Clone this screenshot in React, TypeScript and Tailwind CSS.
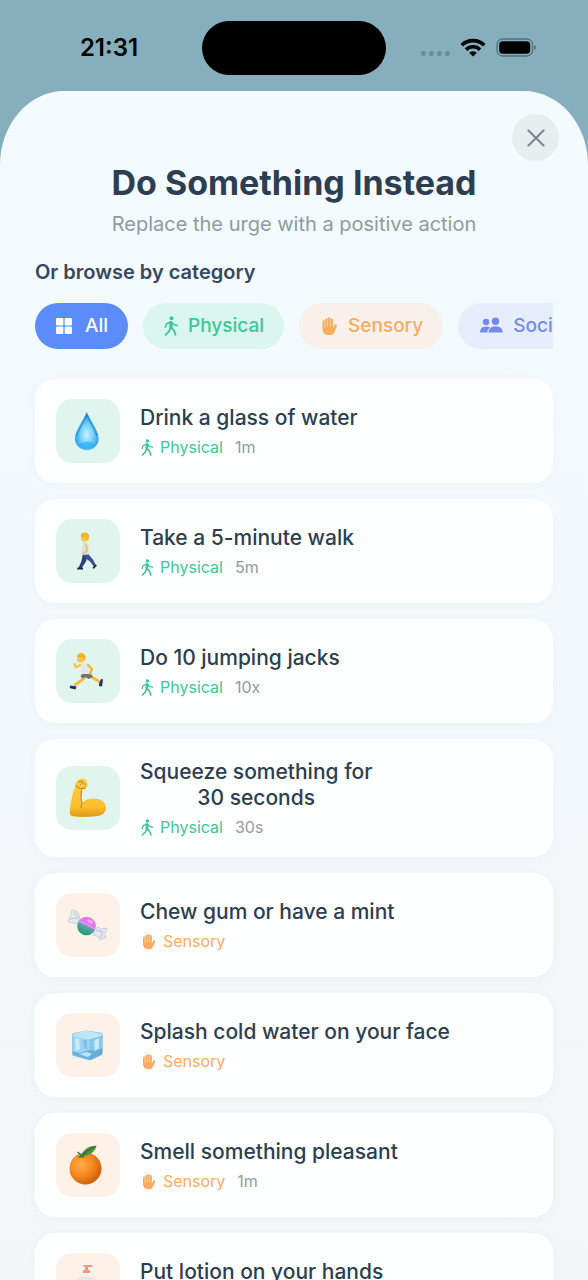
import { ReactNode, useState } from "react";
import clsx from "clsx";

type Category = "physical" | "sensory" | "social";

interface Activity {
  title: string;
  category: Category;
  amount?: string;
  picture: ReactNode;
}

interface IconProps {
  className?: string;
}

const WalkIcon = ({ className }: IconProps) => (
  <svg viewBox="0 0 16 20" className={className} fill="none" stroke="currentColor" strokeLinecap="round" strokeLinejoin="round">
    <circle cx="8.500" cy="2.300" r="2" fill="currentColor" stroke="none" />
    <path d="M8 6.500v5.500" strokeWidth="3.200" />
    <path d="M7.500 6 3.500 7.800 2.300 11.200M9 6.500l2 2.300 3.500.7" strokeWidth="1.500" />
    <path d="m7.300 12-1.300 3.500-3.500 3.300M8.700 12l2.500 2.800 1.300 4" strokeWidth="1.800" />
  </svg>
);

const HandIcon = ({ className }: IconProps) => (
  <svg viewBox="0 0 20 20" className={className}>
    <path
      d="M3.500 5.500q.2-1.300 1.300-1.300.6 0 1 .4.100-2.200 1.500-2.200.7 0 1.100.5.300-1.700 1.600-1.700 1.400 0 1.600 1.600.5-.5 1.200-.4 1.200.2 1.200 1.700V12l1.400-2.800q.7-1.300 1.700-.9 1 .5.600 1.900l-1.800 5q-1.300 3.900-6.100 3.900-6.300 0-6.300-6.400Z"
      fill="currentColor"
    />
    <path d="M6 5v6M8.600 3.500V10.500M11.400 3.500V10.500" fill="none" stroke="#fff" strokeWidth=".8" strokeLinecap="round" opacity=".55" />
  </svg>
);

const PeopleIcon = ({ className }: IconProps) => (
  <svg viewBox="0 0 26 20" className={className} fill="currentColor">
    <circle cx="8" cy="6" r="3.200" />
    <circle cx="17.500" cy="5.300" r="3.700" />
    <path d="M2 16.500q0-6 6-6 2.500 0 4 1.100-2.500 1.900-2.700 4.900Z" />
    <path d="M10.500 16.500q.3-6.200 7-6.200 6.800 0 7.300 6.200Z" />
  </svg>
);

const GridIcon = ({ className }: IconProps) => (
  <svg viewBox="0 0 18 18" className={className} fill="currentColor">
    <rect x="1" y="1" width="7.400" height="7.400" rx="1.200" />
    <rect x="9.600" y="1" width="7.400" height="7.400" rx="1.200" />
    <rect x="1" y="9.600" width="7.400" height="7.400" rx="1.200" />
    <rect x="9.600" y="9.600" width="7.400" height="7.400" rx="1.200" />
  </svg>
);

const Drop = () => (
  <svg viewBox="0 0 40 40" className="size-10">
    <defs>
      <radialGradient id="drop" cx="0.5" cy="0.6" r="0.6">
        <stop offset="0" stopColor="#c9f1ff" />
        <stop offset="0.4" stopColor="#7fd6fb" />
        <stop offset="1" stopColor="#128de0" />
      </radialGradient>
    </defs>
    <path d="M18.800 1C16 8 7 19 7 27.500a11.800 11.800 0 0 0 23.600 0C30.600 19 21.600 8 18.800 1Z" fill="url(#drop)" />
    <path d="M18.800 4C16.500 10 10 19 8.700 25M18.800 4C21 10 27.600 19 28.900 25" fill="none" stroke="#1277b5" strokeWidth="1.200" opacity=".6" />
    <ellipse cx="18.800" cy="34" rx="7" ry="3.500" fill="#15adfa" opacity=".6" />
  </svg>
);

const Walker = () => (
  <svg viewBox="0 0 40 40" className="size-10">
    <path d="m15 22-1.500 8-3 7 2.500 1 5-7.500 1.500-5Z" fill="#2c3f78" />
    <path d="m14 22 2 4 6 4.500 4.500 6 1.800-1.800-3.300-6-5.500-6.700Z" fill="#3b4f8e" />
    <path d="M9.500 36.500h5.500v2H9Z" fill="#1b2545" />
    <path d="m24.500 36.500 3.500-3 .8 1.300-3.300 3.200Z" fill="#1b2545" />
    <path d="M15 11.500q3.500-1.500 5 1.500 1.500 5 .5 10.500l-7 .5q-.5-7 1.500-12.500Z" fill="#eadfc5" />
    <path d="M18 14q1.500 3 1 5.500l-4.500 4" fill="none" stroke="#d5c096" strokeWidth="1.600" strokeLinecap="round" />
    <circle cx="16.500" cy="7" r="3.700" fill="#fbc64a" />
    <path d="M12.500 5.500q.5-4 4.500-4 4.500.5 4 4.500l-1 4-2-3Z" fill="#eeb52e" />
  </svg>
);

const Runner = () => (
  <svg viewBox="0 0 40 40" className="size-10">
    <path d="m18 25-4 4-7 5" fill="none" stroke="#f5b93a" strokeWidth="2.800" strokeLinecap="round" strokeLinejoin="round" />
    <path d="m22 25 5 3 5 3" fill="none" stroke="#f5b93a" strokeWidth="2.800" strokeLinecap="round" strokeLinejoin="round" />
    <path d="m2.500 34.500 6 1-1 3-6-1.500Z" fill="#1f3359" />
    <path d="m31 33 2-5 2 .5-1 7-3-.5Z" fill="#1f3359" />
    <path d="M14.500 22h8l2.500 4-4.500 2-3-2-3 1.500-2-2Z" fill="#76726a" />
    <path d="M12 12.500q5-1.500 8 1 3 4 2.500 9.500h-8.500q-.5-5-3-8.500Z" fill="#e4e7e8" />
    <path d="m12 14-4 2.500-1.500-3.500" fill="none" stroke="#f8c245" strokeWidth="2.200" strokeLinecap="round" strokeLinejoin="round" />
    <path d="m20 14 4 4-2 4.500" fill="none" stroke="#eeb13a" strokeWidth="2.200" strokeLinecap="round" strokeLinejoin="round" />
    <circle cx="12.800" cy="7.500" r="4" fill="#fbc64a" />
    <path d="M8.800 6q.5-4 5-4 4.500 1 3.700 6l-1.700 2-1-3.500Z" fill="#ecb22a" />
  </svg>
);

const Biceps = () => (
  <svg viewBox="0 0 40 40" className="size-10">
    <defs>
      <linearGradient id="arm" x1="0" y1="0" x2="0" y2="1">
        <stop offset="0" stopColor="#ffce4a" />
        <stop offset="0.75" stopColor="#fabe2b" />
        <stop offset="1" stopColor="#dd971a" />
      </linearGradient>
    </defs>
    <path
      d="M8 4Q11 0 15.500.5 20 2 19.500 7q-1 5-6 5-1.500 7 0 13.500Q18 20 27 20.500q10.500 1 11 9Q38 38 25 38.500q-12 1-21-.5Q1 37 2 30 4.500 14 7 9Z"
      fill="url(#arm)"
    />
    <path d="M8 8q4 4 9 2M10.500 4q3-2 4.500 0l-2.500 2.500M16 5l1.500 2M13.500 12.500q-1.500 7 .5 13-1 1.500-1 4.500" fill="none" stroke="#b9781a" strokeWidth="1" strokeLinecap="round" />
  </svg>
);

const Candy = () => (
  <svg viewBox="0 0 40 40" className="size-10">
    <defs>
      <linearGradient id="candy" x1="0.7" y1="0.1" x2="0.3" y2="0.9">
        <stop offset="0.1" stopColor="#f06df0" />
        <stop offset="0.46" stopColor="#cb7be5" />
        <stop offset="0.58" stopColor="#4ea89a" />
        <stop offset="1" stopColor="#1f9c72" />
      </linearGradient>
    </defs>
    <path d="M12 15q-3 1-4.500 4L0 16.500l2-4L4 5l5 1.500 2 3Z" fill="#e3e9ee" stroke="#b9c5d0" strokeWidth=".7" />
    <path d="m26 25 4-3 3 2 6-1-2 5 1 4-6 3-3-4-4-1Z" fill="#e4e5f6" stroke="#bdbee0" strokeWidth=".7" />
    <path d="m2 14 8-1-4-6m22 18 7 2-3 6" fill="none" stroke="#a9b8c5" strokeWidth=".7" />
    <circle cx="18.500" cy="21" r="9.300" fill="url(#candy)" />
    <path d="M11 16q7 2 16 8" fill="none" stroke="#d6c7fa" strokeWidth="1.200" opacity=".6" />
    <ellipse cx="22" cy="16.500" rx="3" ry="1.600" transform="rotate(30 22 16.500)" fill="#fbb6ff" opacity=".8" />
  </svg>
);

const IceCube = () => (
  <svg viewBox="0 0 40 40" className="size-10">
    <path d="M4 10q0-1.500 2-2l12-2.500 15 2q2 .5 2 2.500l-.5 18q0 1.500-1.500 2.500l-10 4.500q-1.500.5-3 0L5.500 31Q4 30.500 4 29Z" fill="#8ac8eb" />
    <path d="m5 9 13-3.500L34.500 9 22 13Z" fill="#bde5f8" />
    <path d="m4.500 10 17 3.500-.5 20L5 29Z" fill="#9ed5f2" />
    <path d="M7 14q3-1.500 4 0l1 10-4.500 2Z" fill="#d4effb" opacity=".8" />
    <path d="M15 15h4v9l-3-1Z" fill="#66b0dc" opacity=".6" />
    <path d="M26 16q3-3 5-2v9l-4 3Z" fill="#cfedfb" opacity=".9" />
    <path d="m4.500 26 7 2 9-3 7 1 7-3v6l-12 6-17-5Z" fill="#5199c8" opacity=".6" />
    <path d="m11 29 8-2 5 2-4 3Z" fill="#bde4f6" />
    <path d="m5 10 16.500 3.500L34.500 9.500" fill="none" stroke="#dff4fd" strokeWidth="1" />
  </svg>
);

const Orange = () => (
  <svg viewBox="0 0 40 40" className="size-10">
    <defs>
      <radialGradient id="orange" cx="0.36" cy="0.36" r="0.7">
        <stop offset="0" stopColor="#ffad4b" />
        <stop offset="0.5" stopColor="#f78a21" />
        <stop offset="1" stopColor="#cb5c0d" />
      </radialGradient>
    </defs>
    <circle cx="17.500" cy="23.500" r="16" fill="url(#orange)" />
    <path d="M9.500 11.500q4-1 8 0-3 2.500-4 .5-2 2-4-.5Z" fill="#577626" />
    <path d="M13 12Q15 1.500 28.500.5q-1.500 9-15.500 11.500Z" fill="#4e9140" />
    <path d="M13 12q0-3-3.500-5M14 11q5-6 13-9.500" fill="none" stroke="#33682d" strokeWidth="1.200" />
  </svg>
);

const Lotion = () => (
  <svg viewBox="0 0 40 40" className="size-10">
    <path d="M14.500 0h9l1.500 1-1.500 1H20v3h2v3h-7V5h2V2.500Z" fill="#e8998b" />
    <path d="M7 19q0-6 7-7h9q7 1 7 7v20H7Z" fill="#e9e6e5" />
    <path d="M7 21h23v10H7Z" fill="#f1b7a9" />
  </svg>
);

const activities: Activity[] = [
  { title: "Drink a glass of water", category: "physical", amount: "1m", picture: <Drop /> },
  { title: "Take a 5-minute walk", category: "physical", amount: "5m", picture: <Walker /> },
  { title: "Do 10 jumping jacks", category: "physical", amount: "10x", picture: <Runner /> },
  { title: "Squeeze something for\n30 seconds", category: "physical", amount: "30s", picture: <Biceps /> },
  { title: "Chew gum or have a mint", category: "sensory", picture: <Candy /> },
  { title: "Splash cold water on your face", category: "sensory", picture: <IceCube /> },
  { title: "Smell something pleasant", category: "sensory", amount: "1m", picture: <Orange /> },
  { title: "Put lotion on your hands", category: "sensory", picture: <Lotion /> },
];

const categories = {
  physical: {
    label: "Physical",
    icon: WalkIcon,
    text: "text-[#3cc79b]",
    pill: "bg-[#dbf5ef]",
    tile: "bg-[#e1f5ef]",
    pillIcon: "h-5 w-4",
    smallIcon: "h-[17px] w-[14px]",
  },
  sensory: {
    label: "Sensory",
    icon: HandIcon,
    text: "text-[#f6ad5f]",
    pill: "bg-[#f7f1e9]",
    tile: "bg-[#fdf1e8]",
    pillIcon: "size-5",
    smallIcon: "size-[17px]",
  },
  social: {
    label: "Social",
    icon: PeopleIcon,
    text: "text-[#748aef]",
    pill: "bg-[#e6edfd]",
    tile: "bg-[#e6edfd]",
    pillIcon: "h-5 w-[26px]",
    smallIcon: "h-4 w-5",
  },
};

function StatusBar() {
  return (
    <div className="grid h-[91px] shrink-0 grid-cols-[1fr_184px_1fr] items-center pt-1 text-black">
      <span className="pl-4 text-center text-[24px] font-semibold leading-7">21:31</span>
      <div className="h-[54px] rounded-full bg-black" />
      <div className="flex items-center gap-[10px] pl-[35px]">
        <div className="flex gap-[3px] pt-3">
          {[0, 1, 2, 3].map((n) => (
            <span key={n} className="size-[5px] rounded-full bg-[#6b8b98]" />
          ))}
        </div>
        <svg viewBox="0 0 26 19" className="h-[19px] w-[26px]" aria-label="Wi-Fi">
          <g fill="none" stroke="currentColor" strokeWidth="3.600">
            <path d="M1.800 7.200a16 16 0 0 1 22.400 0" />
            <path d="M6 11.600a10 10 0 0 1 14 0" />
          </g>
          <path d="m13 18.500-3.800-3.800a5.500 5.500 0 0 1 7.600 0Z" fill="currentColor" />
        </svg>
        <svg viewBox="0 0 40 19" className="h-[19px] w-10" aria-label="Battery">
          <rect x="1" y="1" width="35.500" height="17" rx="5.500" fill="none" stroke="#55707b" strokeWidth="1.300" />
          <rect x="3.200" y="3.200" width="31" height="12.600" rx="3.600" fill="currentColor" />
          <path d="M38 7q2 .6 2 2.500T38 12Z" fill="#55707b" />
        </svg>
      </div>
    </div>
  );
}

function ActivityCard({ activity }: { activity: Activity }) {
  const { label, icon: Icon, text, tile, smallIcon } = categories[activity.category];

  return (
    <button
      type="button"
      className="flex w-full items-center gap-5 rounded-[20px] bg-[#fdfefe] px-[21px] py-5 text-left shadow-[0_2px_12px_rgba(60,90,120,0.03)]"
    >
      <span className={clsx("flex size-16 shrink-0 items-center justify-center rounded-2xl", tile)}>
        {activity.picture}
      </span>
      <span className="flex flex-col items-start gap-[6px]">
        <span className="whitespace-pre-line text-center text-[21px] font-medium leading-[26px] text-[#2c3e50]">
          {activity.title}
        </span>
        <span className="flex items-center text-base leading-5">
          <span className={clsx("flex items-center gap-[6px]", text)}>
            <Icon className={smallIcon} />
            {label}
          </span>
          {activity.amount && <span className="pl-3 text-[#929c9f]">{activity.amount}</span>}
        </span>
      </span>
    </button>
  );
}

export default function App() {
  const [selected, setSelected] = useState<Category | "all">("all");

  const visible = activities.filter((a) => selected === "all" || a.category === selected);

  return (
    <div className="flex h-screen flex-col overflow-hidden bg-[#86aebc] font-['Inter','Liberation_Sans',sans-serif]">
      <StatusBar />
      <main className="relative flex min-h-0 flex-1 flex-col bg-linear-to-b from-[#f4fbff] via-[#f2f8fc] to-[#f4f5f6] px-[35px] pt-[70px] [border-radius:64px_64px_0_0/74px_74px_0_0]">
        <button
          type="button"
          aria-label="Close"
          className="absolute right-[29px] top-[23px] flex size-[47px] items-center justify-center rounded-full bg-[#e8edf0] text-[#7f8a8e]"
        >
          <svg viewBox="0 0 18 18" className="size-[18px]">
            <path d="m1.500 1.500 15 15m0-15-15 15" fill="none" stroke="currentColor" strokeWidth="2.200" strokeLinecap="round" />
          </svg>
        </button>

        <header className="text-center">
          <h1 className="text-[34px] font-bold leading-[44px] text-[#2c3e50]">Do Something Instead</h1>
          <p className="pt-[6px] text-[20px] leading-[26px] text-[#8f9b9f]">Replace the urge with a positive action</p>
        </header>

        <h2 className="pt-[22px] text-[20px] font-semibold leading-[26px] text-[#34495e]">Or browse by category</h2>

        <div className="flex shrink-0 gap-[15px] overflow-x-auto pt-[18px] [scrollbar-width:none]">
          <button
            type="button"
            onClick={() => setSelected("all")}
            className="flex h-[46px] shrink-0 items-center gap-3 rounded-full bg-[#5b8cfa] px-5 text-[19px] font-medium text-white"
          >
            <GridIcon className="size-[18px]" />
            All
          </button>
          {(["physical", "sensory", "social"] as const).map((key) => {
            const { label, icon: Icon, text, pill, pillIcon } = categories[key];
            return (
              <button
                key={key}
                type="button"
                onClick={() => setSelected(key)}
                className={clsx("flex h-[46px] shrink-0 items-center gap-[9px] rounded-full px-5 text-[19px] font-medium", text, pill)}
              >
                <Icon className={pillIcon} />
                {label}
              </button>
            );
          })}
        </div>

        <div className="-mx-[35px] mt-[14px] flex min-h-0 flex-1 flex-col gap-4 overflow-y-auto px-[35px] pt-4 [scrollbar-width:none]">
          {visible.map((activity) => (
            <ActivityCard key={activity.title} activity={activity} />
          ))}
        </div>
      </main>
    </div>
  );
}
